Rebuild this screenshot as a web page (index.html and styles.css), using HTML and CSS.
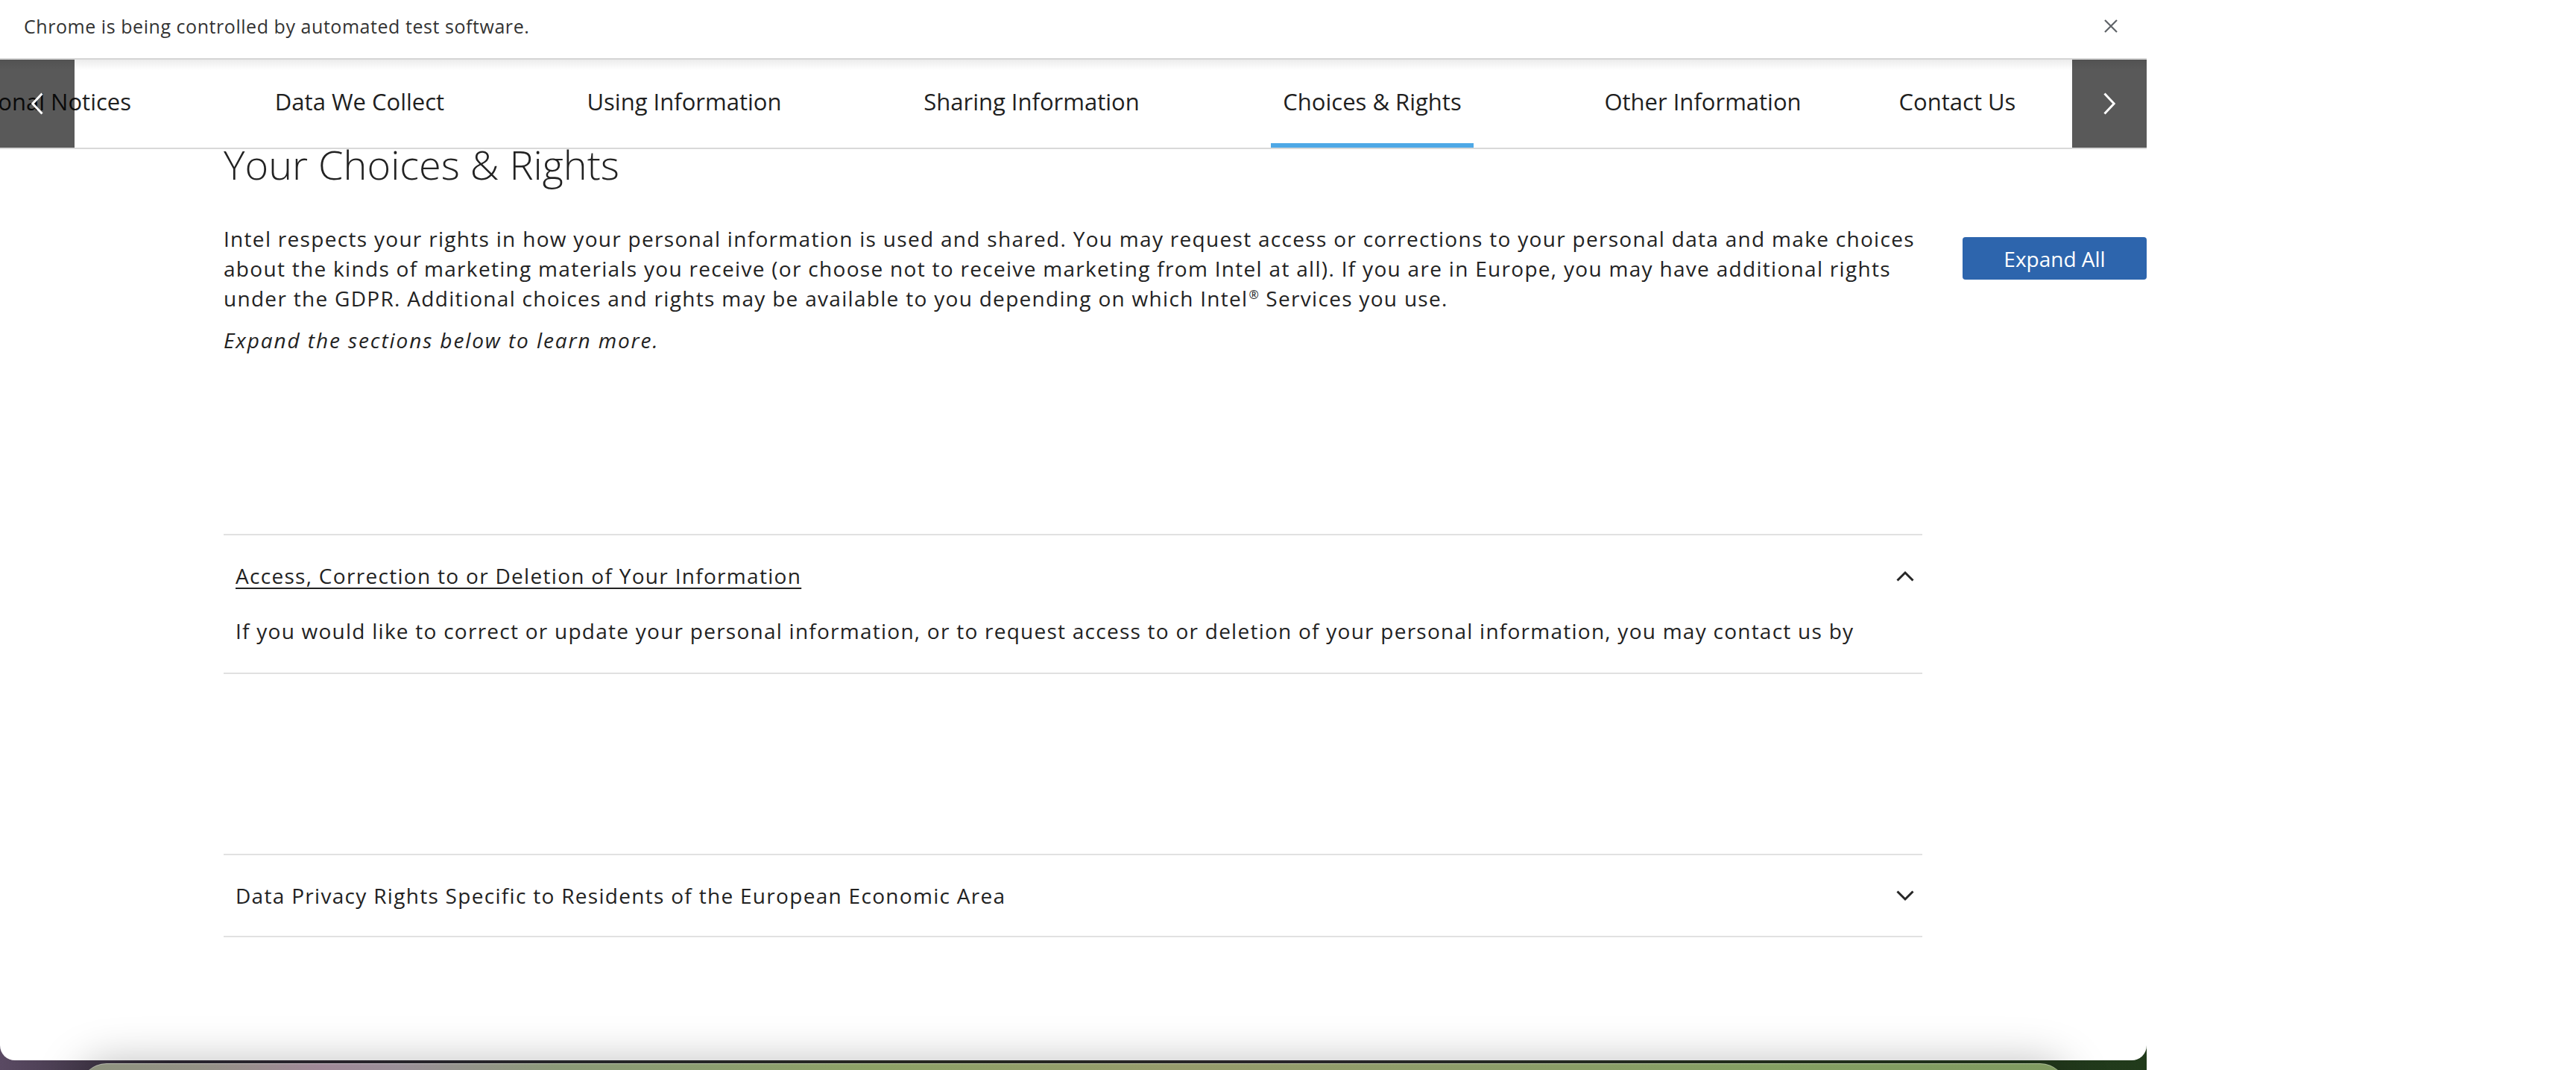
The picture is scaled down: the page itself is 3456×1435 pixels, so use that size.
FILE: index.html
```html
<!DOCTYPE html>
<html lang="en">
<head>
<meta charset="utf-8">
<title>Your Choices &amp; Rights</title>
<link rel="stylesheet" href="styles.css">
</head>
<body>
<div class="desk">
  <div class="window">
    <div class="infobar">
      <span class="infobar-text">Chrome is being controlled by automated test software.</span>
      <button class="infobar-close" aria-label="Close">
        <svg width="20" height="20" viewBox="0 0 20 20"><path d="M2 2L18 18M18 2L2 18" stroke="#5f6368" stroke-width="2.2" fill="none"/></svg>
      </button>
    </div>
    <nav class="tabs">
      <div class="tabs-track">
        <a class="tab tab-first">Additional Notices</a>
        <a class="tab tab-collect">Data We Collect</a>
        <a class="tab tab-using">Using Information</a>
        <a class="tab tab-sharing">Sharing Information</a>
        <a class="tab tab-choices tab-active">Choices &amp; Rights</a>
        <a class="tab tab-other">Other Information</a>
        <a class="tab tab-contact">Contact Us</a>
      </div>
      <button class="tabs-arrow tabs-arrow-left" aria-label="Previous">
        <svg width="16" height="30" viewBox="0 0 16 30"><path d="M14.5 1.5L1.8 15L14.5 28.5" stroke="#fff" stroke-width="3" fill="none"/></svg>
      </button>
      <button class="tabs-arrow tabs-arrow-right" aria-label="Next">
        <svg width="16" height="30" viewBox="0 0 16 30"><path d="M1.5 1.5L14.2 15L1.5 28.5" stroke="#fff" stroke-width="3" fill="none"/></svg>
      </button>
    </nav>
    <main class="content">
      <h1 class="title">Your Choices &amp; Rights</h1>
      <div class="intro">
        <p>Intel respects your rights in how your personal information is used and shared. You may request access or corrections to your personal data and make choices about the kinds of marketing materials you receive (or choose not to receive marketing from Intel at all). If you are in Europe, you may have additional rights under the GDPR. Additional choices and rights may be available to you depending on which Intel<span class="reg">®</span> Services you use.</p>
        <p class="intro-note">Expand the sections below to learn more.</p>
      </div>
      <button class="expand-all">Expand All</button>

      <section class="acc acc-open">
        <div class="acc-head">
          <span class="acc-title">Access, Correction to or Deletion of Your Information</span>
          <svg class="acc-icon" width="24" height="15" viewBox="0 0 24 15"><path d="M1.5 13.5L12 3L22.5 13.5" stroke="#262626" stroke-width="3" fill="none"/></svg>
        </div>
        <div class="acc-body">If you would like to correct or update your personal information, or to request access to or deletion of your personal information, you may contact us by</div>
      </section>

      <section class="acc acc-second">
        <div class="acc-head">
          <span class="acc-title">Data Privacy Rights Specific to Residents of the European Economic Area</span>
          <svg class="acc-icon" width="24" height="15" viewBox="0 0 24 15"><path d="M1.5 1.5L12 12L22.5 1.5" stroke="#262626" stroke-width="3" fill="none"/></svg>
        </div>
      </section>
    </main>
  </div>
  <div class="dock"></div>
</div>
</body>
</html>
```
FILE: styles.css
```css
* { box-sizing: border-box; }

html, body {
  margin: 0;
  padding: 0;
}

body {
  width: 3456px;
  height: 1435px;
  overflow: hidden;
  background: #ffffff;
  font-family: "Open Sans", "Noto Sans", sans-serif;
  color: #222222;
}

.desk {
  position: relative;
  width: 2880px;
  height: 1435px;
  background: linear-gradient(90deg, #5a4a63 0%, #2f2934 8%, #2b2a2f 25%, #2a2c24 45%, #2e2a30 60%, #263220 80%, #213b1b 100%);
}

.window {
  position: relative;
  width: 2880px;
  height: 1422px;
  background: #ffffff;
  border-radius: 0 0 20px 20px;
  overflow: hidden;
}

/* Chrome automation infobar */
.infobar {
  height: 78px;
  display: flex;
  align-items: center;
  justify-content: space-between;
  padding: 0 38px 8px 32px;
  background: #ffffff;
  font-size: 25px;
  letter-spacing: 0.55px;
  color: #333333;
}

.infobar-close {
  display: flex;
  padding: 0;
  border: 0;
  background: transparent;
}

/* Section tabs */
.tabs {
  position: relative;
  height: 122px;
  border-top: 2px solid #d5d5d5;
  border-bottom: 2px solid #d9d9d9;
  background: linear-gradient(#ececec, #ffffff 14px);
  overflow: hidden;
}

.tabs-track {
  display: flex;
  height: 100%;
  gap: 161px;
  margin-left: -208px;
}

.tab {
  flex: none;
  display: flex;
  align-items: center;
  justify-content: center;
  border-bottom: 6px solid transparent;
  font-size: 31px;
  white-space: nowrap;
  color: #1f1f1f;
}

.tab-first { width: 400px; justify-content: flex-end; padding-right: 16px; }
.tab-collect { width: 259px; }
.tab-using { width: 290px; }
.tab-sharing { width: 320px; }
.tab-choices { width: 272px; }
.tab-other { width: 293px; }
.tab-contact { width: 188px; margin-left: -60px; }

.tab-active { border-bottom-color: #4ea8e6; }

.tabs-arrow {
  position: absolute;
  top: -1px;
  bottom: 0;
  width: 100px;
  display: flex;
  align-items: center;
  justify-content: center;
  padding: 0;
  border: 0;
  background: rgba(0, 0, 0, 0.65);
}

.tabs-arrow-left { left: 0; }
.tabs-arrow-right { right: 0; }

/* Main content */
.content {
  display: grid;
  grid-template-columns: 2279px 247px;
  column-gap: 54px;
  align-items: start;
  padding-left: 300px;
}

.title {
  grid-column: 1;
  margin: 0;
  font-size: 54px;
  font-weight: 300;
  line-height: 40px;
  color: #222222;
}

.intro {
  grid-column: 1;
  grid-row: 2;
  margin-top: 60px;
}

.intro p {
  margin: 0;
  font-size: 28px;
  line-height: 40px;
  letter-spacing: 1.3px;
}

.intro .intro-note {
  margin-top: 16px;
  font-style: italic;
  letter-spacing: 1.9px;
}

.reg {
  font-size: 16px;
  line-height: 1;
  vertical-align: super;
  letter-spacing: 0;
  margin-left: 1px;
  margin-right: 1px;
}

.expand-all {
  grid-column: 2;
  grid-row: 2;
  margin-top: 78px;
  height: 57px;
  padding: 0;
  border: 0;
  border-radius: 4px;
  background: #2d65ad;
  color: #ffffff;
  font-family: "Open Sans", "Noto Sans", sans-serif;
  font-size: 28px;
}

/* Accordion */
.acc {
  grid-column: 1;
  margin-top: 240px;
  border-top: 2px solid #e1e1e1;
  border-bottom: 2px solid #e1e1e1;
}

.acc-second { margin-top: 241px; }

.acc-head {
  display: flex;
  align-items: center;
  justify-content: space-between;
  padding: 34px 11px 34px 16px;
  font-size: 28px;
  line-height: 40px;
  letter-spacing: 1.3px;
}

.acc-open .acc-title {
  text-decoration: underline;
  text-decoration-thickness: 2px;
  text-underline-offset: 5px;
}

.acc-icon { flex: none; }

.acc-body {
  padding: 0 16px 36px;
  font-size: 28px;
  line-height: 40px;
  letter-spacing: 1.25px;
}

/* macOS dock peeking in below the window */
.dock {
  position: absolute;
  left: 107px;
  top: 1426px;
  width: 2666px;
  height: 80px;
  border-radius: 36px;
  border-top: 1px solid rgba(255, 255, 255, 0.35);
  background: linear-gradient(90deg, #8e937e 0%, #949185 6%, #a08898 12%, #9a8f98 16%, #8c9a78 24%, #8da266 40%, #979c6c 55%, #8d9d69 70%, #84a062 85%, #7f9a60 100%);
  box-shadow: 0 0 60px rgba(0, 0, 0, 0.28);
  z-index: 2;
}
```
